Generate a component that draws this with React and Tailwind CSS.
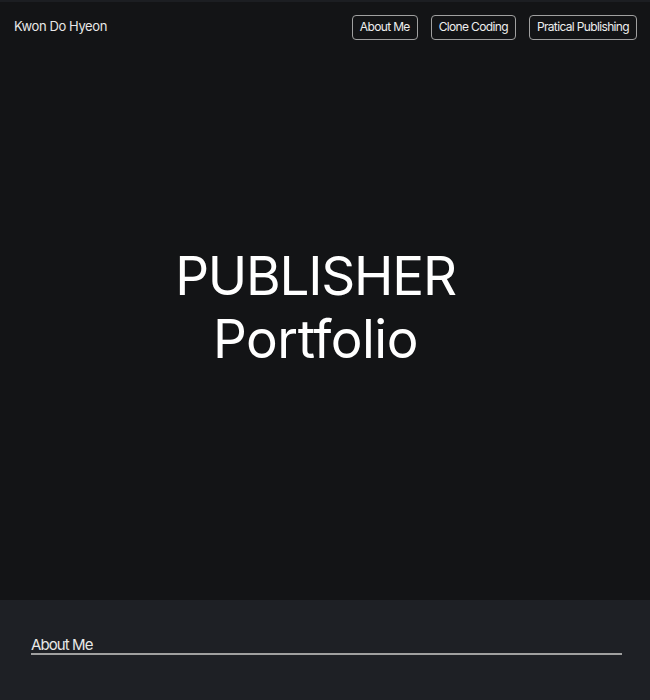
export default function App() {
  const font = { fontFamily: "Inter, 'Noto Sans', sans-serif" };
  return (
    <div className="w-full min-h-[700px] bg-[#1e2025] text-white [font-variant-ligatures:none] [font-feature-settings:'liga'_0,'calt'_0]" style={font}>
      <section className="relative h-[600px] bg-[#131416] border-t-2 border-[#1c1e22] flex flex-col">
        <header className="flex items-center justify-between h-[50px] pl-[14px] pr-[13px]">
          <span className="text-[13px] text-[#e8e8e8] tracking-[-0.4px]">Kwon Do Hyeon</span>
          <nav className="flex gap-[13px]">
            {["About Me", "Clone Coding", "Pratical Publishing"].map((t) => (
              <button
                key={t}
                className="h-[25px] px-[7px] border border-[#a0a0a0] rounded-[4px] text-[12px] text-[#eeeeee] tracking-[-0.65px] leading-none"
              >
                {t}
              </button>
            ))}
          </nav>
        </header>
        <div className="flex-1 flex items-center justify-center pb-[36px] pr-[19px]">
          <h1 className="flex flex-col items-center text-[53px] leading-[63px] font-normal text-white">
            <span className="tracking-[-1.2px]">PUBLISHER</span>
            <span className="tracking-[-0.5px]">Portfolio</span>
          </h1>
        </div>
      </section>
      <section className="px-[31px] pt-[36px] pb-[40px] pr-[28px]">
        <h2 className="text-[15px] text-[#e8e8e8] leading-[17px] tracking-[-0.9px] border-b-2 border-[#a0a0a0]">
          About Me
        </h2>
      </section>
    </div>
  );
}
